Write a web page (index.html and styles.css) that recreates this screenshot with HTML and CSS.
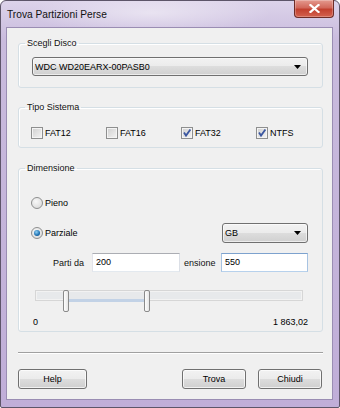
FILE: index.html
```html
<!DOCTYPE html>
<html lang="it">
<head>
  <meta charset="UTF-8" />
  <title>Trova Partizioni Perse</title>
  <link rel="stylesheet" href="styles.css">
</head>
<body>
  <div class="window">
    <div class="titlebar">
      <span class="title">Trova Partizioni Perse</span>
      <div class="close">
        <svg width="11" height="9" viewBox="0 0 11 9"><path d="M1.5 1 L9.5 8 M9.5 1 L1.5 8" stroke="#fff" stroke-width="2.2" stroke-linecap="square"/></svg>
      </div>
    </div>

    <div class="client">
      <fieldset class="group group-disk">
        <legend>Scegli Disco</legend>
        <div class="group-body">
          <div class="combo combo-disk">
            <span>WDC WD20EARX-00PASB0</span>
            <svg class="arrow" width="7" height="4" viewBox="0 0 7 4"><path d="M0 0 H7 L3.5 4 Z" fill="#000"/></svg>
          </div>
        </div>
      </fieldset>

      <fieldset class="group group-fs">
        <legend>Tipo Sistema</legend>
        <div class="group-body checks">
          <label class="check"><span class="box"></span>FAT12</label>
          <label class="check"><span class="box"></span>FAT16</label>
          <label class="check"><span class="box">
            <svg width="10" height="10" viewBox="0 0 10 10"><path d="M2 4.6 L4 7.6 L8.4 1.4" fill="none" stroke="#3b57a0" stroke-width="1.8"/></svg>
          </span>FAT32</label>
          <label class="check"><span class="box">
            <svg width="10" height="10" viewBox="0 0 10 10"><path d="M2 4.6 L4 7.6 L8.4 1.4" fill="none" stroke="#3b57a0" stroke-width="1.8"/></svg>
          </span>NTFS</label>
        </div>
      </fieldset>

      <fieldset class="group group-size">
        <legend>Dimensione</legend>
        <div class="group-body">
          <div class="row row-pieno">
            <span class="radio"></span>Pieno
          </div>
          <div class="row row-parziale">
            <span class="radio on"></span>Parziale
            <div class="combo combo-unit">
              <span>GB</span>
              <svg class="arrow" width="7" height="4" viewBox="0 0 7 4"><path d="M0 0 H7 L3.5 4 Z" fill="#000"/></svg>
            </div>
          </div>
          <div class="row row-range">
            <span class="range-label">Parti da</span>
            <div class="field">200</div>
            <span class="range-label second">ensione</span>
            <div class="field active">550</div>
          </div>
          <div class="slider">
            <div class="track"></div>
            <div class="selection"></div>
            <div class="thumb thumb-from"></div>
            <div class="thumb thumb-to"></div>
          </div>
          <div class="scale">
            <span>0</span>
            <span>1 863,02</span>
          </div>
        </div>
      </fieldset>

      <div class="separator"></div>

      <div class="buttons">
        <div class="btn btn-help">Help</div>
        <div class="btn btn-find">Trova</div>
        <div class="btn btn-close">Chiudi</div>
      </div>
    </div>
  </div>
</body>
</html>
```

FILE: styles.css
```css
* { box-sizing: border-box; }
body {
  margin: 0;
  font-family: 'Liberation Sans', Arial, sans-serif;
  font-size: 9px;
  color: #000;
  background: #fff;
}
.window {
  width: 340px;
  height: 408px;
  display: flex;
  flex-direction: column;
  border: 1px solid #5d5569;
  border-radius: 6px 6px 2px 2px;
  padding: 0 6px 7px 5px;
  background:
    radial-gradient(ellipse 120px 22px at 150px 12px, rgba(255, 255, 255, 0.45), rgba(255, 255, 255, 0) 100%),
    linear-gradient(#dcd3ea, #c9bbdd 40px, #c0aed8);
}
.titlebar {
  height: 26px;
  display: flex;
  align-items: center;
  justify-content: space-between;
  margin: 0 -6px 0 -5px;
  padding-left: 6px;
}
.title {
  font-size: 10.2px;
  color: #111;
  padding-top: 1px;
}
.close {
  align-self: flex-start;
  width: 40px;
  height: 18px;
  margin-top: -1px;
  margin-right: 5px;
  display: flex;
  align-items: center;
  justify-content: center;
  border: 1px solid #6e2c27;
  border-top: none;
  border-radius: 0 0 4px 4px;
  background: linear-gradient(#e49a8f, #d2685b 45%, #c2402f 55%, #d3624f);
  box-shadow: inset 0 0 0 1px rgba(255, 255, 255, 0.25);
}
.client {
  flex: 1;
  display: flex;
  flex-direction: column;
  background: #f0f0f0;
  border: 1px solid #9a8db3;
  padding: 10px 0 10px 0;
}

/* group boxes */
.group {
  margin: 0 9px 0 11px;
  padding: 0;
  min-width: 0;
  border: 1px solid #d5dfe5;
  border-radius: 3px;
  box-shadow: inset 1px 1px 0 #fff;
}
.group legend {
  margin-left: 6px;
  padding: 0 2px;
  line-height: 11px;
  color: #111;
}
.group-fs { margin-top: 14px; }
.group-size { margin-top: 15px; }
.group-disk .group-body { padding: 8px 14px 11px 13px; }
.group-fs .group-body { padding: 14px 0 8px 12px; }
.group-size .group-body { padding: 0 14px 3px 12px; }

.combo {
  height: 19px;
  display: flex;
  align-items: center;
  justify-content: space-between;
  padding: 0 6px 0 2px;
  border: 1px solid #707070;
  border-radius: 3px;
  background: linear-gradient(#f2f2f2, #ebebeb 50%, #dddddd 50%, #d0d0d0);
  box-shadow: inset 0 0 0 1px rgba(255, 255, 255, 0.6);
}
.combo-unit {
  width: 86px;
  height: 20px;
  margin-left: auto;
}

.checks {
  display: grid;
  grid-template-columns: repeat(4, 75px);
}
.check {
  display: flex;
  align-items: center;
  gap: 2px;
  height: 12px;
}
.box {
  width: 12px;
  height: 12px;
  display: flex;
  align-items: center;
  justify-content: center;
  border: 1px solid #8e8f8f;
  background: linear-gradient(135deg, #cfcfcf, #f4f4f4);
  box-shadow: inset 0 0 0 1px #f4f4f4;
}

.row {
  display: flex;
  align-items: center;
  gap: 2px;
}
.row-pieno { margin-top: 23px; height: 12px; }
.row-parziale { margin-top: 14px; height: 20px; }
.radio {
  width: 12px;
  height: 12px;
  border-radius: 50%;
  border: 1px solid #8e8f8f;
  background: radial-gradient(circle at 40% 35%, #f8f8f8, #d4d4d4);
  display: flex;
  align-items: center;
  justify-content: center;
}
.radio.on::after {
  content: "";
  width: 6px;
  height: 6px;
  border-radius: 50%;
  background: radial-gradient(circle at 40% 35%, #8fd0f5, #1b6fb0 60%, #0d4479);
}
.row-range {
  margin-top: 10px;
  height: 19px;
  gap: 0;
}
.range-label {
  margin-left: 22px;
  width: 39px;
  color: #111;
}
.range-label.second {
  margin-left: 4px;
  width: 37px;
}
.field {
  width: 88px;
  height: 19px;
  line-height: 17px;
  padding-left: 3px;
  background: #fff;
  border: 1px solid #abadb3;
  border-color: #abadb3 #dbdfe6 #e3e9ef #e2e3ea;
}
.field.active {
  width: 87px;
  border-color: #7da2ce #a7c3e2 #b7d1ec #a7c3e2;
}

/* range slider */
.slider {
  position: relative;
  height: 22px;
  margin: 18px 5px 0 4px;
}
.track {
  margin-top: 6px;
  height: 11px;
  border: 1px solid #d6d6d6;
  background: #e7e9eb;
  box-shadow: inset 0 0 0 1px #f2f2f2;
}
.selection {
  position: absolute;
  left: 33px;
  top: 9px;
  width: 76px;
  height: 3px;
  background: #c2d2e6;
}
.thumb {
  position: absolute;
  top: 0;
  width: 6px;
  height: 22px;
  border: 1px solid #8a8a8a;
  border-radius: 2px;
  background: linear-gradient(90deg, #fdfdfd, #e6e6e6);
}
.thumb-from { left: 28px; }
.thumb-to { left: 109px; }

.scale {
  display: flex;
  justify-content: space-between;
  margin-top: 5px;
  padding-left: 2px;
  line-height: 11px;
}

.separator {
  margin: 20px 9px 0 11px;
  height: 2px;
  border-top: 1px solid #a0a0a0;
  border-bottom: 1px solid #fff;
}
.buttons {
  display: flex;
  gap: 12px;
  margin: 15px 10px 0 11px;
}
.btn {
  height: 20px;
  width: 64px;
  display: flex;
  align-items: center;
  justify-content: center;
  border: 1px solid #707070;
  border-radius: 3px;
  background: linear-gradient(#f2f2f2, #ebebeb 50%, #dddddd 50%, #cfcfcf);
  box-shadow: inset 0 0 0 1px rgba(255, 255, 255, 0.7);
}
.btn-help { width: 69px; margin-right: auto; }
```
